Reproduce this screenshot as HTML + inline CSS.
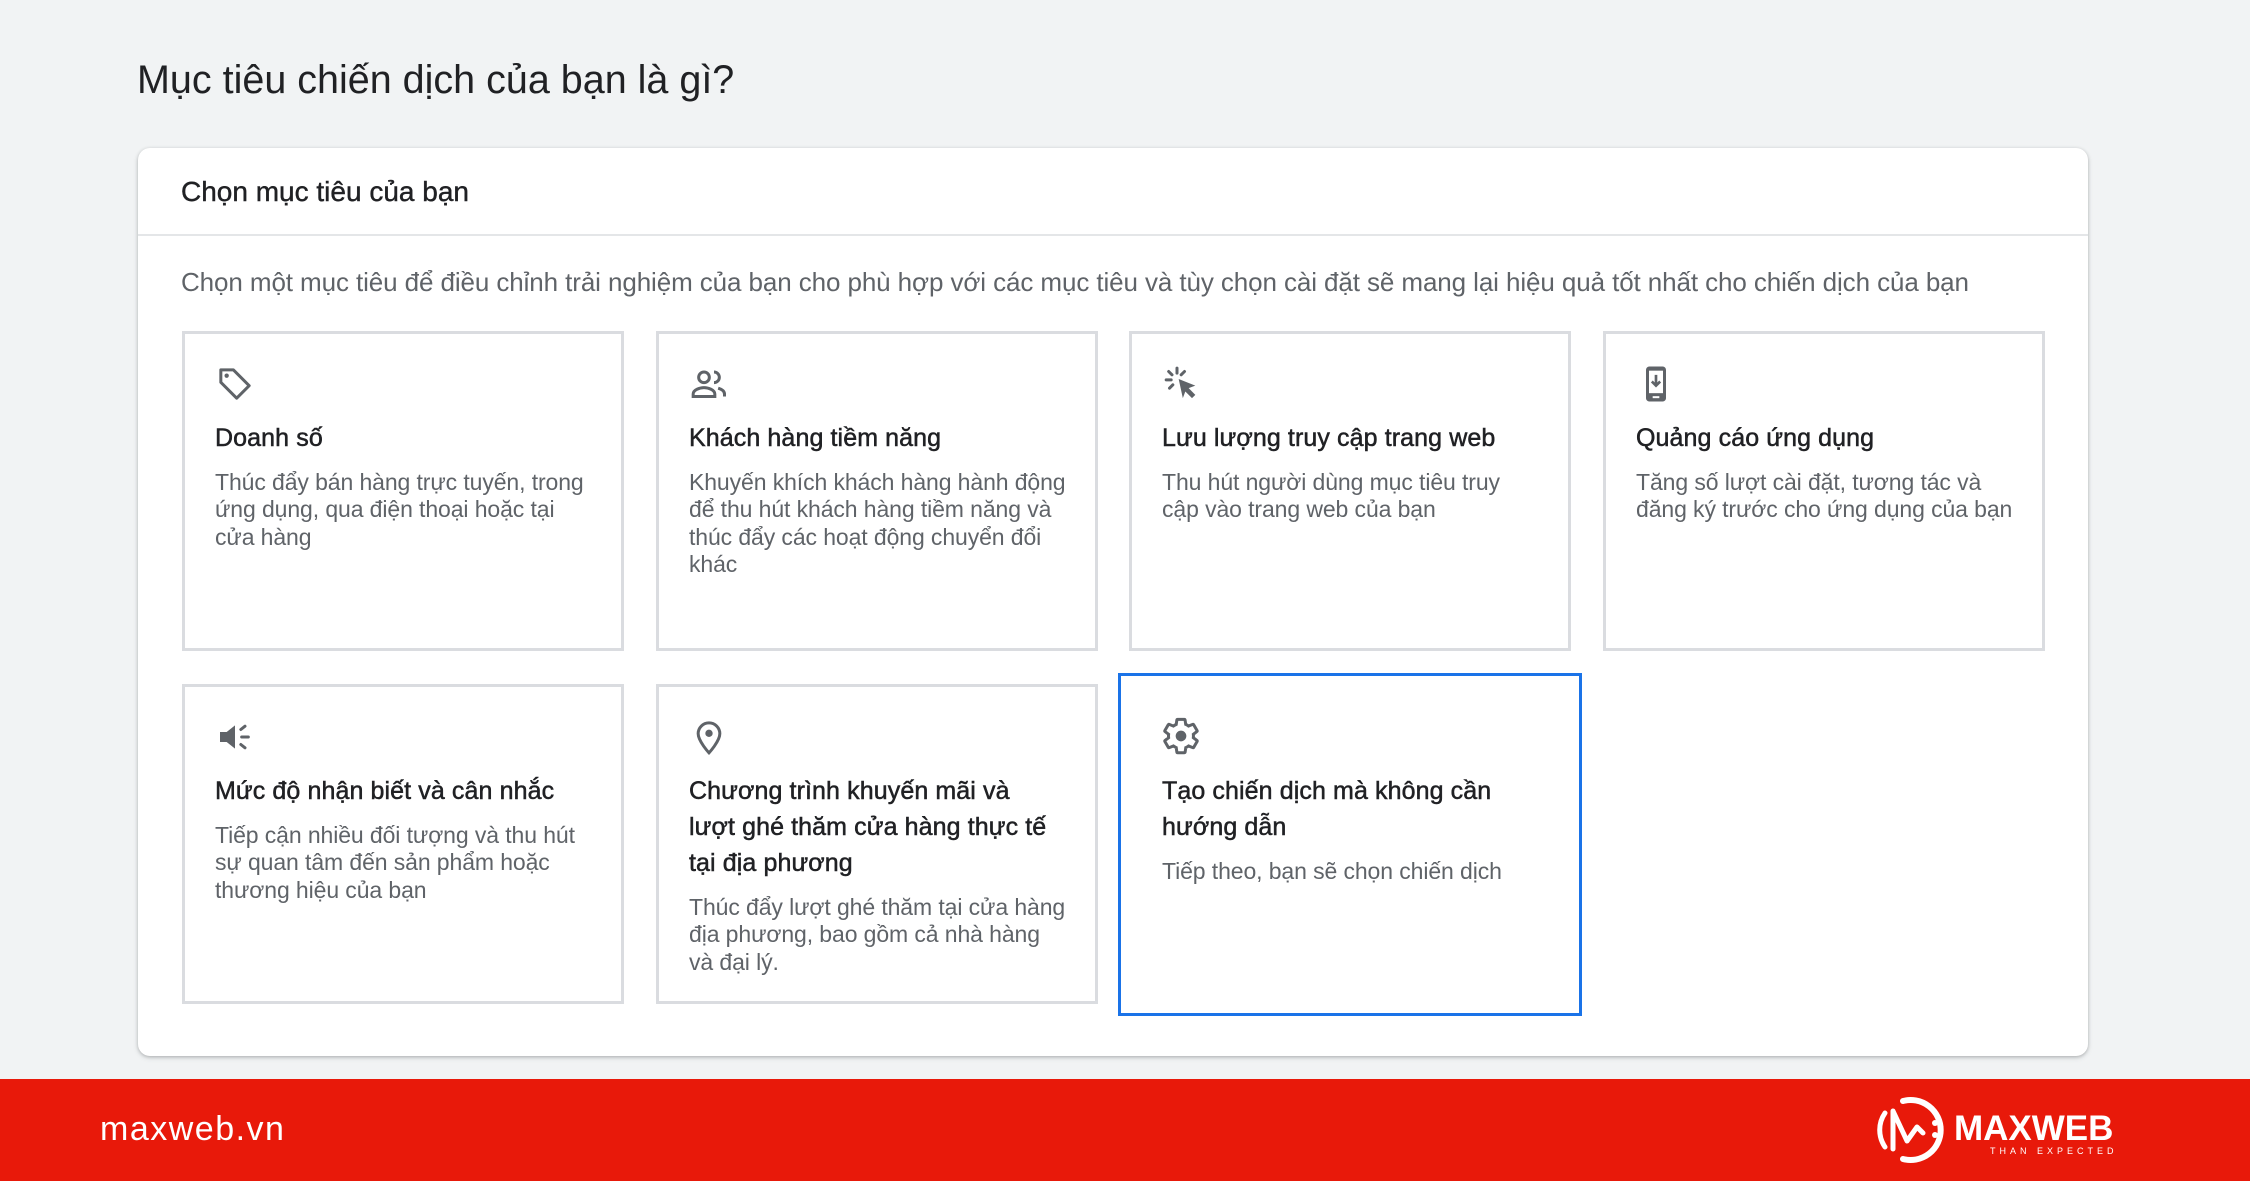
<!DOCTYPE html>
<html><head><meta charset="utf-8">
<style>
*{margin:0;padding:0;box-sizing:border-box}
body{width:2250px;height:1181px;background:#f1f3f4;position:relative;overflow:hidden;font-family:"Liberation Sans",Arial,sans-serif;color:#202124}
.abs{position:absolute}
h1{position:absolute;left:137px;top:58px;font-size:39.5px;font-weight:400;color:#202124;letter-spacing:0px;white-space:nowrap}
.card{position:absolute;left:138px;top:148px;width:1950px;height:908px;background:#fff;border-radius:12px;box-shadow:0 1px 3px rgba(60,64,67,.3),0 2px 6px rgba(60,64,67,.12)}
.hdr{position:absolute;left:43px;top:28px;font-size:28px;color:#202124;white-space:nowrap;-webkit-text-stroke:0.4px #202124}
.div{position:absolute;left:0;right:0;top:86px;height:2px;background:#e4e6e8}
.desc{position:absolute;left:43px;top:119px;font-size:26px;color:#5f6368;white-space:nowrap;letter-spacing:-0.1px}
.tile{position:absolute;width:442px;height:320px;border:3px solid #dadce0;background:#fff}
.tile.sel{border:3px solid #1a73e8}
.ic{position:absolute;left:30px;top:30px;width:40px;height:40px}
.tt{position:absolute;left:30px;top:86px;font-size:25px;font-weight:500;color:#202124;line-height:36px;white-space:nowrap;-webkit-text-stroke:0.5px #202124;letter-spacing:0.1px}
.td{position:absolute;left:30px;font-size:23px;color:#5f6368;line-height:27.3px;white-space:nowrap;letter-spacing:-0.1px}
.foot{position:absolute;left:0;top:1079px;width:2250px;height:102px;background:#e8190a}
</style></head><body>
<h1>Mục tiêu chiến dịch của bạn là gì?</h1>
<div class="card">
 <div class="hdr">Chọn mục tiêu của bạn</div>
 <div class="div"></div>
 <div class="desc">Chọn một mục tiêu để điều chỉnh trải nghiệm của bạn cho phù hợp với các mục tiêu và tùy chọn cài đặt sẽ mang lại hiệu quả tốt nhất cho chiến dịch của bạn</div>
</div>

<div class="tile" style="left:182px;top:331px">
 <svg class="ic" viewBox="0 0 24 24"><path d="M3.5 3.5h7.5l9.5 9.5-7.5 7.5-9.5-9.5z" fill="none" stroke="#5f6368" stroke-width="1.8" stroke-linejoin="round"/><circle cx="7" cy="7" r="1.3" fill="#5f6368"/></svg>
 <div class="tt">Doanh số</div>
 <div class="td" style="top:135px">Thúc đẩy bán hàng trực tuyến, trong<br>ứng dụng, qua điện thoại hoặc tại<br>cửa hàng</div>
</div>
<div class="tile" style="left:656px;top:331px">
 <svg class="ic" viewBox="0 0 24 24"><circle cx="9" cy="8" r="3.2" fill="none" stroke="#5f6368" stroke-width="1.8"/><path d="M2.5 19.5v-1.5c0-2.5 4-3.8 6.5-3.8s6.5 1.3 6.5 3.8v1.5z" fill="none" stroke="#5f6368" stroke-width="1.8"/><path d="M15 4.8a3.2 3.2 0 0 1 0 6.4M17.5 14.5c2 .6 3.8 1.7 3.8 3.5v1.5" fill="none" stroke="#5f6368" stroke-width="1.8"/></svg>
 <div class="tt">Khách hàng tiềm năng</div>
 <div class="td" style="top:135px">Khuyến khích khách hàng hành động<br>để thu hút khách hàng tiềm năng và<br>thúc đẩy các hoạt động chuyển đổi<br>khác</div>
</div>
<div class="tile" style="left:1129px;top:331px">
 <svg class="ic" viewBox="0 0 24 24"><path d="M10 9l10 4-4 1.5 4 4-2 2-4-4-1.5 4z" fill="#5f6368"/><path d="M9 2.5v3M4 4.5l2 2M2.5 9.5h3M4.5 14.5l2-2M13.5 4.5l-2 2" stroke="#5f6368" stroke-width="1.8" stroke-linecap="round"/></svg>
 <div class="tt">Lưu lượng truy cập trang web</div>
 <div class="td" style="top:135px">Thu hút người dùng mục tiêu truy<br>cập vào trang web của bạn</div>
</div>
<div class="tile" style="left:1603px;top:331px">
 <svg class="ic" viewBox="0 0 24 24"><rect x="6" y="1.5" width="12" height="21" rx="2" fill="#5f6368"/><rect x="7.8" y="4" width="8.4" height="13.5" fill="#fff"/><path d="M12 6.5v6M9.5 10.5l2.5 2.5 2.5-2.5" stroke="#5f6368" stroke-width="1.6" fill="none"/><rect x="10" y="19.3" width="4" height="1.2" fill="#fff"/></svg>
 <div class="tt">Quảng cáo ứng dụng</div>
 <div class="td" style="top:135px">Tăng số lượt cài đặt, tương tác và<br>đăng ký trước cho ứng dụng của bạn</div>
</div>

<div class="tile" style="left:182px;top:684px">
 <svg class="ic" viewBox="0 0 24 24"><path d="M3 9h4l5-4v14l-5-4H3z" fill="#5f6368"/><path d="M16 12h4M15.5 7.5l2.5-2M15.5 16.5l2.5 2" stroke="#5f6368" stroke-width="1.8" stroke-linecap="round"/></svg>
 <div class="tt">Mức độ nhận biết và cân nhắc</div>
 <div class="td" style="top:135px">Tiếp cận nhiều đối tượng và thu hút<br>sự quan tâm đến sản phẩm hoặc<br>thương hiệu của bạn</div>
</div>
<div class="tile" style="left:656px;top:684px">
 <svg class="ic" viewBox="0 0 24 24"><path d="M12 21.5s-6.5-7-6.5-11.5a6.5 6.5 0 0 1 13 0c0 4.5-6.5 11.5-6.5 11.5z" fill="none" stroke="#5f6368" stroke-width="1.8"/><circle cx="12" cy="9.8" r="2.2" fill="#5f6368"/></svg>
 <div class="tt">Chương trình khuyến mãi và<br>lượt ghé thăm cửa hàng thực tế<br>tại địa phương</div>
 <div class="td" style="top:207px">Thúc đẩy lượt ghé thăm tại cửa hàng<br>địa phương, bao gồm cả nhà hàng<br>và đại lý.</div>
</div>
<div class="tile sel" style="left:1118px;top:673px;width:464px;height:343px">
 <svg class="ic" viewBox="0 0 24 24" style="left:40px;top:40px"><path d="M19.4 13c.04-.33.06-.66.06-1s-.02-.67-.06-1l2.1-1.65c.2-.15.25-.42.12-.64l-2-3.46c-.12-.22-.39-.3-.61-.22l-2.49 1c-.52-.4-1.08-.73-1.690-.98l-.38-2.65A.49.49 0 0 0 14 2h-4c-.25 0-.46.18-.49.42l-.38 2.650c-.61.25-1.17.59-1.69.98l-2.49-1c-.23-.09-.49 0-.61.22l-2 3.46c-.13.22-.07.49.12.64L4.57 11c-.04.33-.07.67-.07 1s.03.67.07 1l-2.11 1.65c-.19.15-.24.42-.12.64l2 3.46c.12.22.39.3.61.22l2.49-1c.52.4 1.08.73 1.69.98l.38 2.65c.03.24.24.42.49.42h4c.25 0 .46-.18.49-.42l.38-2.65c.61-.25 1.17-.59 1.69-.98l2.49 1c.23.09.49 0 .61-.22l2-3.46c.12-.22.07-.49-.12-.64z" fill="none" stroke="#5f6368" stroke-width="1.8"/><circle cx="12" cy="12" r="3.2" fill="#5f6368"/></svg>
 <div class="tt" style="left:41px;top:97px">Tạo chiến dịch mà không cần<br>hướng dẫn</div>
 <div class="td" style="left:41px;top:182px">Tiếp theo, bạn sẽ chọn chiến dịch</div>
</div>

<div class="foot">
 <div class="abs" style="left:100px;top:31px;font-size:34px;color:#fff;letter-spacing:1.5px">maxweb.vn</div>
 <svg class="abs" style="left:1873px;top:16px" width="72" height="70" viewBox="0 0 72 70">
  <path d="M30 6a30 30 0 1 1 0 58" fill="none" stroke="#fff" stroke-width="6" stroke-linecap="round"/>
  <path d="M12 18a30 30 0 0 0 0 34" fill="none" stroke="#fff" stroke-width="5" stroke-linecap="round"/>
  <path d="M20 54V16l14 30 10-14 6 6" fill="none" stroke="#fff" stroke-width="5" stroke-linecap="round" stroke-linejoin="round"/>
  <circle cx="62" cy="28" r="3" fill="#fff"/><circle cx="62" cy="40" r="3" fill="#fff"/>
 </svg>
 <div class="abs" style="left:1954px;top:30px;font-size:35px;font-weight:700;color:#fff;letter-spacing:0px">MAXWEB</div>
 <div class="abs" style="left:1990px;top:67px;font-size:9px;color:#fff;letter-spacing:4px">THAN EXPECTED</div>
</div>
</body></html>
